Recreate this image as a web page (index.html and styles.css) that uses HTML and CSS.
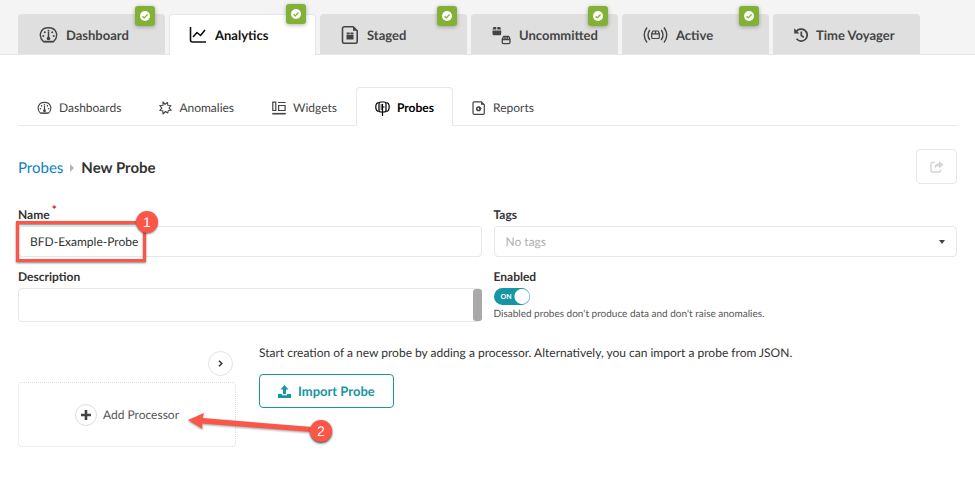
FILE: index.html
```html
<!DOCTYPE html>
<html lang="en">
<head>
  <meta charset="UTF-8">
  <meta name="viewport" content="width=device-width, initial-scale=1.0">
  <title>New Probe</title>
  <link rel="stylesheet" href="styles.css">
</head>
<body>

<!-- shared icons -->
<svg class="sprite" aria-hidden="true">
  <symbol id="gauge" viewBox="0 0 19 18">
    <path d="M4.300 15.500C-1 10.500 1 1.800 9.500 1.800S20 10.500 14.700 15.500Z" fill="none" stroke="currentColor" stroke-width="1.400" stroke-linejoin="round"/>
    <path d="M4.500 15.800h10M9.500 6v8" fill="none" stroke="currentColor" stroke-width="1.500"/>
    <circle cx="9.500" cy="12.500" r="1.800" fill="currentColor"/>
    <circle cx="9.500" cy="4.800" r="1" fill="currentColor"/>
    <circle cx="5.800" cy="6.300" r="1" fill="currentColor"/>
    <circle cx="13.200" cy="6.300" r="1" fill="currentColor"/>
    <circle cx="4.300" cy="10" r="1" fill="currentColor"/>
    <circle cx="14.700" cy="10" r="1" fill="currentColor"/>
  </symbol>
  <symbol id="check" viewBox="0 0 10 10">
    <circle cx="5" cy="5" r="5" fill="#fff"/>
    <path d="M2.600 5.200l1.700 1.700 3.200-3.400" fill="none" stroke="#83b135" stroke-width="1.300"/>
  </symbol>
</svg>

<nav class="main-nav">
  <a class="tab" href="#">
    <svg width="19" height="18"><use href="#gauge"/></svg>
    Dashboard
    <span class="status"><svg width="10" height="10"><use href="#check"/></svg></span>
  </a>
  <a class="tab active" href="#">
    <svg width="18" height="18" viewBox="0 0 18 18" fill="none" stroke="currentColor" stroke-width="1.600"><path d="M1.500 1v13q0 2 2 2H17M4 11l4-4.500 3.500 3L16 4" stroke-linejoin="round"/></svg>
    Analytics
    <span class="status"><svg width="10" height="10"><use href="#check"/></svg></span>
  </a>
  <a class="tab" href="#">
    <svg width="18" height="18" viewBox="0 0 18 18"><path d="M3 .8h9.200l4 4V15.500q0 1.700-1.700 1.700H3Q1.500 17.200 1.500 15.500V2.500Q1.500.8 3 .8Z" fill="none" stroke="currentColor" stroke-width="1.600"/><path d="M12 .8v4h4ZM5.500 9h7v4.500h-7ZM5.800 6.500h2.900v2H5.500ZM9.400 6.500h2.900l.3 2H9.400Z" fill="currentColor"/></svg>
    Staged
    <span class="status"><svg width="10" height="10"><use href="#check"/></svg></span>
  </a>
  <a class="tab" href="#">
    <svg width="19" height="19" viewBox="0 0 19 19"><path d="M1.500 1h2.800v2.600H.5ZM5.300 1h2.800l1 2.600H5.300ZM.5 4.600h8.700v3.200q0 1.500-1.500 1.500H2Q.5 9.300.5 7.800Z" fill="currentColor"/><path d="M11.500 10.500h5.300l1.200 2.800v3q0 1.400-1.400 1.400h-5q-1.400 0-1.400-1.400v-3ZM10.200 13.500H18M13 10.500v2.500M15.200 10.500v2.500" fill="none" stroke="currentColor" stroke-width="1.300" stroke-linejoin="round"/></svg>
    Uncommitted
    <span class="status"><svg width="10" height="10"><use href="#check"/></svg></span>
  </a>
  <a class="tab" href="#">
    <svg width="25" height="18" viewBox="0 0 25 18" fill="none" stroke="currentColor" stroke-width="1.400"><path d="M4 1.500q-5.500 7.500 0 15M6.800 4q-3.600 5 0 10M21 1.500q5.500 7.500 0 15M18.200 4q3.600 5 0 10"/><path d="M10 5h5l1.300 2.500V11.500q0 1-1 1H9.700q-1 0-1-1V7.500ZM8.700 7.800h7.600M12.500 5v2.500" stroke-width="1.200"/></svg>
    Active
    <span class="status"><svg width="10" height="10"><use href="#check"/></svg></span>
  </a>
  <a class="tab" href="#">
    <svg width="14" height="16" viewBox="0 0 14 16" fill="none" stroke="currentColor" stroke-width="1.700"><path d="M2 5A6 6 0 1 1 2.500 11.800M7.300 4.500v4l2.500 1.700"/><path d="M.2 1.300V6.500H5.400Z" fill="currentColor" stroke="none"/></svg>
    Time Voyager
  </a>
</nav>

<main class="page">
  <nav class="sub-nav">
    <a class="sub-tab" href="#">
      <svg width="15" height="14"><use href="#gauge"/></svg>
      Dashboards
    </a>
    <a class="sub-tab" href="#">
      <svg width="13" height="14" viewBox="0 0 13 14" fill="none" stroke="currentColor" stroke-width="1.100" stroke-linejoin="round"><path d="M4 .8L6 3.300 8.500 1.500 8.800 4.300 12 4.500 10 7 12.300 9.300 9.300 9.500 8.800 12 6.500 10.500 4 13 3.800 9.800 .8 9.500 2.800 7.200.8 4.500 4 4.300Z"/></svg>
      Anomalies
    </a>
    <a class="sub-tab" href="#">
      <svg width="14" height="14" viewBox="0 0 14 14" fill="none" stroke="currentColor" stroke-width="1.200"><path d="M.8 1.200h3v8.300h-3ZM6 1.500h7.700M6.600 4.500h6.500v5H6.600Z"/><path d="M.2 12.700h13.600" stroke-width="1.600"/></svg>
      Widgets
    </a>
    <a class="sub-tab active" href="#">
      <svg width="15" height="15" viewBox="0 0 15 15" fill="none" stroke="currentColor" stroke-width="1.200"><path d="M5.800 1h3.400q1.800 0 1.800 2v6q0 2-1.800 2H5.800Q4 11 4 9V3q0-2 1.800-2ZM3.500 1.500Q.8 2 .8 6t2.700 4.500M11.500 1.500q2.700.5 2.700 4.500t-2.700 4.500M7.500 3v12M5.500 4h2M5.500 6h4M5.500 8h2"/></svg>
      Probes
    </a>
    <a class="sub-tab" href="#">
      <svg width="14" height="14" viewBox="0 0 14 14"><path d="M2 .8h7.300l3 3V12q0 1.300-1.300 1.300H2.300Q1 13.300 1 12V2Q1 .8 2 .8Z" fill="none" stroke="currentColor" stroke-width="1.200"/><path d="M9 .8v3h3Z" fill="currentColor"/><circle cx="6.500" cy="7.800" r="1.800" fill="none" stroke="currentColor" stroke-width="1.500"/><path d="M7 5v3h3Z" fill="currentColor"/></svg>
      Reports
    </a>
  </nav>

  <header class="title-row">
    <h1 class="breadcrumb">
      <a href="#">Probes</a>
      <svg width="4" height="8" viewBox="0 0 4 8"><path d="M0 0l4 4-4 4Z" fill="#b5b5b5"/></svg>
      <span>New Probe</span>
    </h1>
    <button class="share" type="button" aria-label="Export" disabled>
      <svg width="14" height="12" viewBox="0 0 14 12"><path d="M5 1.500H2Q1 1.500 1 2.500V10Q1 11 2 11H9.500Q10.500 11 10.500 10V8.500" fill="none" stroke="currentColor" stroke-width="1.500"/><path d="M9 0l4.500 3.700L9 7.500V5.200Q5.500 5 5 8.500 3 2.500 9 2.300Z" fill="currentColor"/></svg>
    </button>
  </header>

  <form class="form">
    <div class="field">
      <label for="name">Name<sup class="required">*</sup></label>
      <div class="control">
        <input class="text-box" type="text" id="name" value="BFD-Example-Probe">
        <div class="highlight"><span class="step step-one">1</span></div>
      </div>
    </div>
    <div class="field">
      <label for="tags">Tags</label>
      <div class="control">
        <select class="text-box tags" id="tags"><option>No tags</option></select>
        <svg class="caret" width="6" height="4" viewBox="0 0 6 4"><path d="M0 0h6L3 4Z" fill="#444"/></svg>
      </div>
    </div>
    <div class="field">
      <label for="description">Description</label>
      <div class="control">
        <textarea class="text-box description" id="description"></textarea>
        <span class="scroll-thumb"></span>
      </div>
    </div>
    <div class="field">
      <label for="enabled">Enabled</label>
      <div class="control">
        <input class="toggle" type="checkbox" id="enabled" checked>
        <span class="toggle-text">ON</span>
      </div>
      <p class="help">Disabled probes don't produce data and don't raise anomalies.</p>
    </div>
  </form>

  <section class="builder">
    <div class="processors">
      <button class="expand" type="button" aria-label="Expand">
        <svg width="5" height="7" viewBox="0 0 5 7"><path d="M1 .7l2.800 2.800L1 6.300" fill="none" stroke="#333" stroke-width="1.500"/></svg>
      </button>
      <button class="add-processor" type="button">
        <span class="plus"><svg width="10" height="10" viewBox="0 0 10 10"><path d="M5 0v10M0 5h10" stroke="#444" stroke-width="2.600"/></svg></span>
        Add Processor
      </button>
      <div class="pointer">
        <svg width="134" height="28" viewBox="0 0 134 28"><path d="M0 8L16 1 14.500 6 124 15V20L14 11.500 14.500 17Z" fill="#fb5648"/></svg>
        <span class="step step-two">2</span>
      </div>
    </div>
    <div class="start">
      <p class="intro">Start creation of a new probe by adding a processor. Alternatively, you can import a probe from JSON.</p>
      <button class="import" type="button">
        <svg width="13" height="13" viewBox="0 0 13 13" fill="currentColor"><path d="M6.500 0L10.500 4.500H8V9H5V4.500H2.500ZM0 9h4v1.300h5V9h4v4H0Z"/></svg>
        Import Probe
      </button>
    </div>
  </section>
</main>

</body>
</html>
```
FILE: styles.css
```css
* {
  box-sizing: border-box;
}
body {
  margin: 0;
  font-family: Lato, "Liberation Sans", sans-serif;
  font-size: 12px;
  line-height: 16px;
  text-rendering: geometricPrecision;
  color: #333;
  background-color: #fff;
}
button, input, select, textarea {
  font: inherit;
  color: inherit;
  text-rendering: inherit;
}
a {
  color: inherit;
  text-decoration: none;
}
p {
  margin: 0;
}
svg {
  flex: none;
}
.sprite {
  position: absolute;
  width: 0;
  height: 0;
}

/* top tabs */
.main-nav {
  display: flex;
  gap: 4px;
  padding: 14px 18px 0;
  background-color: #f4f4f4;
  border-bottom: 1px solid #e3e8ee;
}
.tab {
  position: relative;
  display: flex;
  flex: 0 1 147px;
  align-items: center;
  gap: 8px;
  height: 40px;
  padding: 2px 0 0 21px;
  border-radius: 4px 4px 0 0;
  background-color: #dfdfdf;
  color: #444;
  font-size: 13px;
  font-weight: bold;
}
.tab.active {
  height: 41px;
  margin-bottom: -1px;
  padding: 0 0 0 19px;
  background-color: #fff;
  border: 1px solid #e3e8ee;
  border-bottom: none;
  color: #111;
}
.status {
  position: absolute;
  top: -8px;
  right: 10px;
  display: flex;
  align-items: center;
  justify-content: center;
  width: 20px;
  height: 20px;
  border-radius: 3px;
  background-color: #83b135;
  box-shadow: 0 1px 4px rgba(0, 0, 0, 0.3);
}
.tab.active .status {
  top: -11px;
  right: 9px;
}

.page {
  padding: 32px 18px;
}

/* section tabs */
.sub-nav {
  display: flex;
  border-bottom: 1px solid #e8ebee;
}
.sub-tab {
  display: flex;
  align-items: center;
  gap: 7px;
  height: 38px;
  padding: 2px 18px 0;
  border: 1px solid transparent;
  border-bottom: none;
  color: #444;
}
.sub-tab.active {
  height: 39px;
  margin-bottom: -1px;
  border-color: #e3e8ee;
  border-radius: 4px 4px 0 0;
  background-color: #fff;
  color: #000;
  font-weight: bold;
}

/* title */
.title-row {
  display: flex;
  align-items: center;
  justify-content: space-between;
  margin-top: 23px;
}
.breadcrumb {
  display: flex;
  align-items: center;
  gap: 7px;
  margin: 0;
  padding-top: 2px;
  font-size: 15px;
  line-height: 20px;
}
.breadcrumb a {
  color: #0d7fc0;
  font-weight: normal;
}
.share {
  display: flex;
  align-items: center;
  justify-content: center;
  width: 41px;
  height: 35px;
  border: 1px solid #e3e8ee;
  border-radius: 4px;
  background-color: #fff;
  color: #d5d5d5;
}

/* form */
.form {
  display: grid;
  grid-template-columns: 1fr 1fr;
  gap: 11px 12px;
  margin-top: 22px;
}
.field label {
  display: block;
  height: 20px;
  line-height: 18px;
  font-weight: bold;
}
.required {
  margin-left: 2px;
  color: #e02020;
  font-size: 12px;
  line-height: 0;
}
.control {
  position: relative;
  display: flex;
}
.text-box {
  width: 100%;
  height: 31px;
  padding: 0 11px;
  border: 1px solid #e3e8ea;
  border-radius: 4px;
  background-color: #fff;
}
.tags {
  appearance: none;
  color: #b0b0b0;
}
.caret {
  position: absolute;
  top: 14px;
  right: 12px;
}
.description {
  height: 34px;
  resize: none;
}
.scroll-thumb {
  position: absolute;
  top: 1px;
  right: 0;
  width: 9px;
  height: 32px;
  border-radius: 3px;
  background-color: #a9a9a9;
}
.toggle {
  appearance: none;
  width: 36px;
  height: 17px;
  margin: 0;
  border-radius: 9px;
  background: radial-gradient(circle at 28px 50%, #fff 7px, #1795a3 8px);
}
.toggle-text {
  position: absolute;
  top: 1px;
  left: 7px;
  color: #fff;
  font-size: 7px;
  font-weight: bold;
  pointer-events: none;
}
.help {
  margin-top: 1px;
  font-size: 10px;
  color: #555;
}

/* processors and import */
.builder {
  display: flex;
  gap: 23px;
  margin-top: 23px;
}
.processors {
  position: relative;
  display: flex;
  flex-direction: column;
  width: 218px;
  padding-top: 6px;
}
.expand {
  display: flex;
  align-items: center;
  justify-content: center;
  align-self: flex-end;
  width: 25px;
  height: 25px;
  margin-right: 3px;
  padding: 0;
  border: 1px solid #dfe3ea;
  border-radius: 50%;
  background-color: #fff;
}
.add-processor {
  display: flex;
  align-items: center;
  justify-content: center;
  gap: 6px;
  height: 65px;
  margin-top: 6px;
  border: 1px dotted #ddd;
  border-radius: 4px;
  background-color: #fff;
  color: #555;
}
.plus {
  display: flex;
  align-items: center;
  justify-content: center;
  width: 22px;
  height: 22px;
  border: 1px solid #ddd;
  border-radius: 50%;
}
.intro {
  color: #333;
}
.import {
  display: flex;
  align-items: center;
  justify-content: center;
  gap: 7px;
  height: 34px;
  margin-top: 13px;
  padding: 0 18px;
  border: 1px solid #1795a3;
  border-radius: 4px;
  background-color: #fff;
  color: #1795a3;
  font-size: 13px;
  font-weight: bold;
}

/* callouts */
.highlight {
  position: absolute;
  top: -5px;
  left: -2px;
  width: 130px;
  height: 41px;
  border: 3px solid #fb5648;
  box-shadow: 0 1px 2px rgba(0, 0, 0, 0.5), inset 0 1px 2px rgba(0, 0, 0, 0.5);
  pointer-events: none;
}
.step {
  position: absolute;
  width: 22px;
  height: 22px;
  border-radius: 50%;
  background-color: #fb5648;
  box-shadow: 0 1px 2px rgba(0, 0, 0, 0.5);
  color: #fff;
  font-family: "Liberation Sans", sans-serif;
  font-size: 14px;
  line-height: 22px;
  text-align: center;
}
.step-one {
  top: -13px;
  right: -15px;
}
.pointer {
  position: absolute;
  top: 67px;
  left: 170px;
  filter: drop-shadow(0 1px 1px rgba(0, 0, 0, 0.4));
  pointer-events: none;
}
.step-two {
  top: 8px;
  right: -10px;
}
```
